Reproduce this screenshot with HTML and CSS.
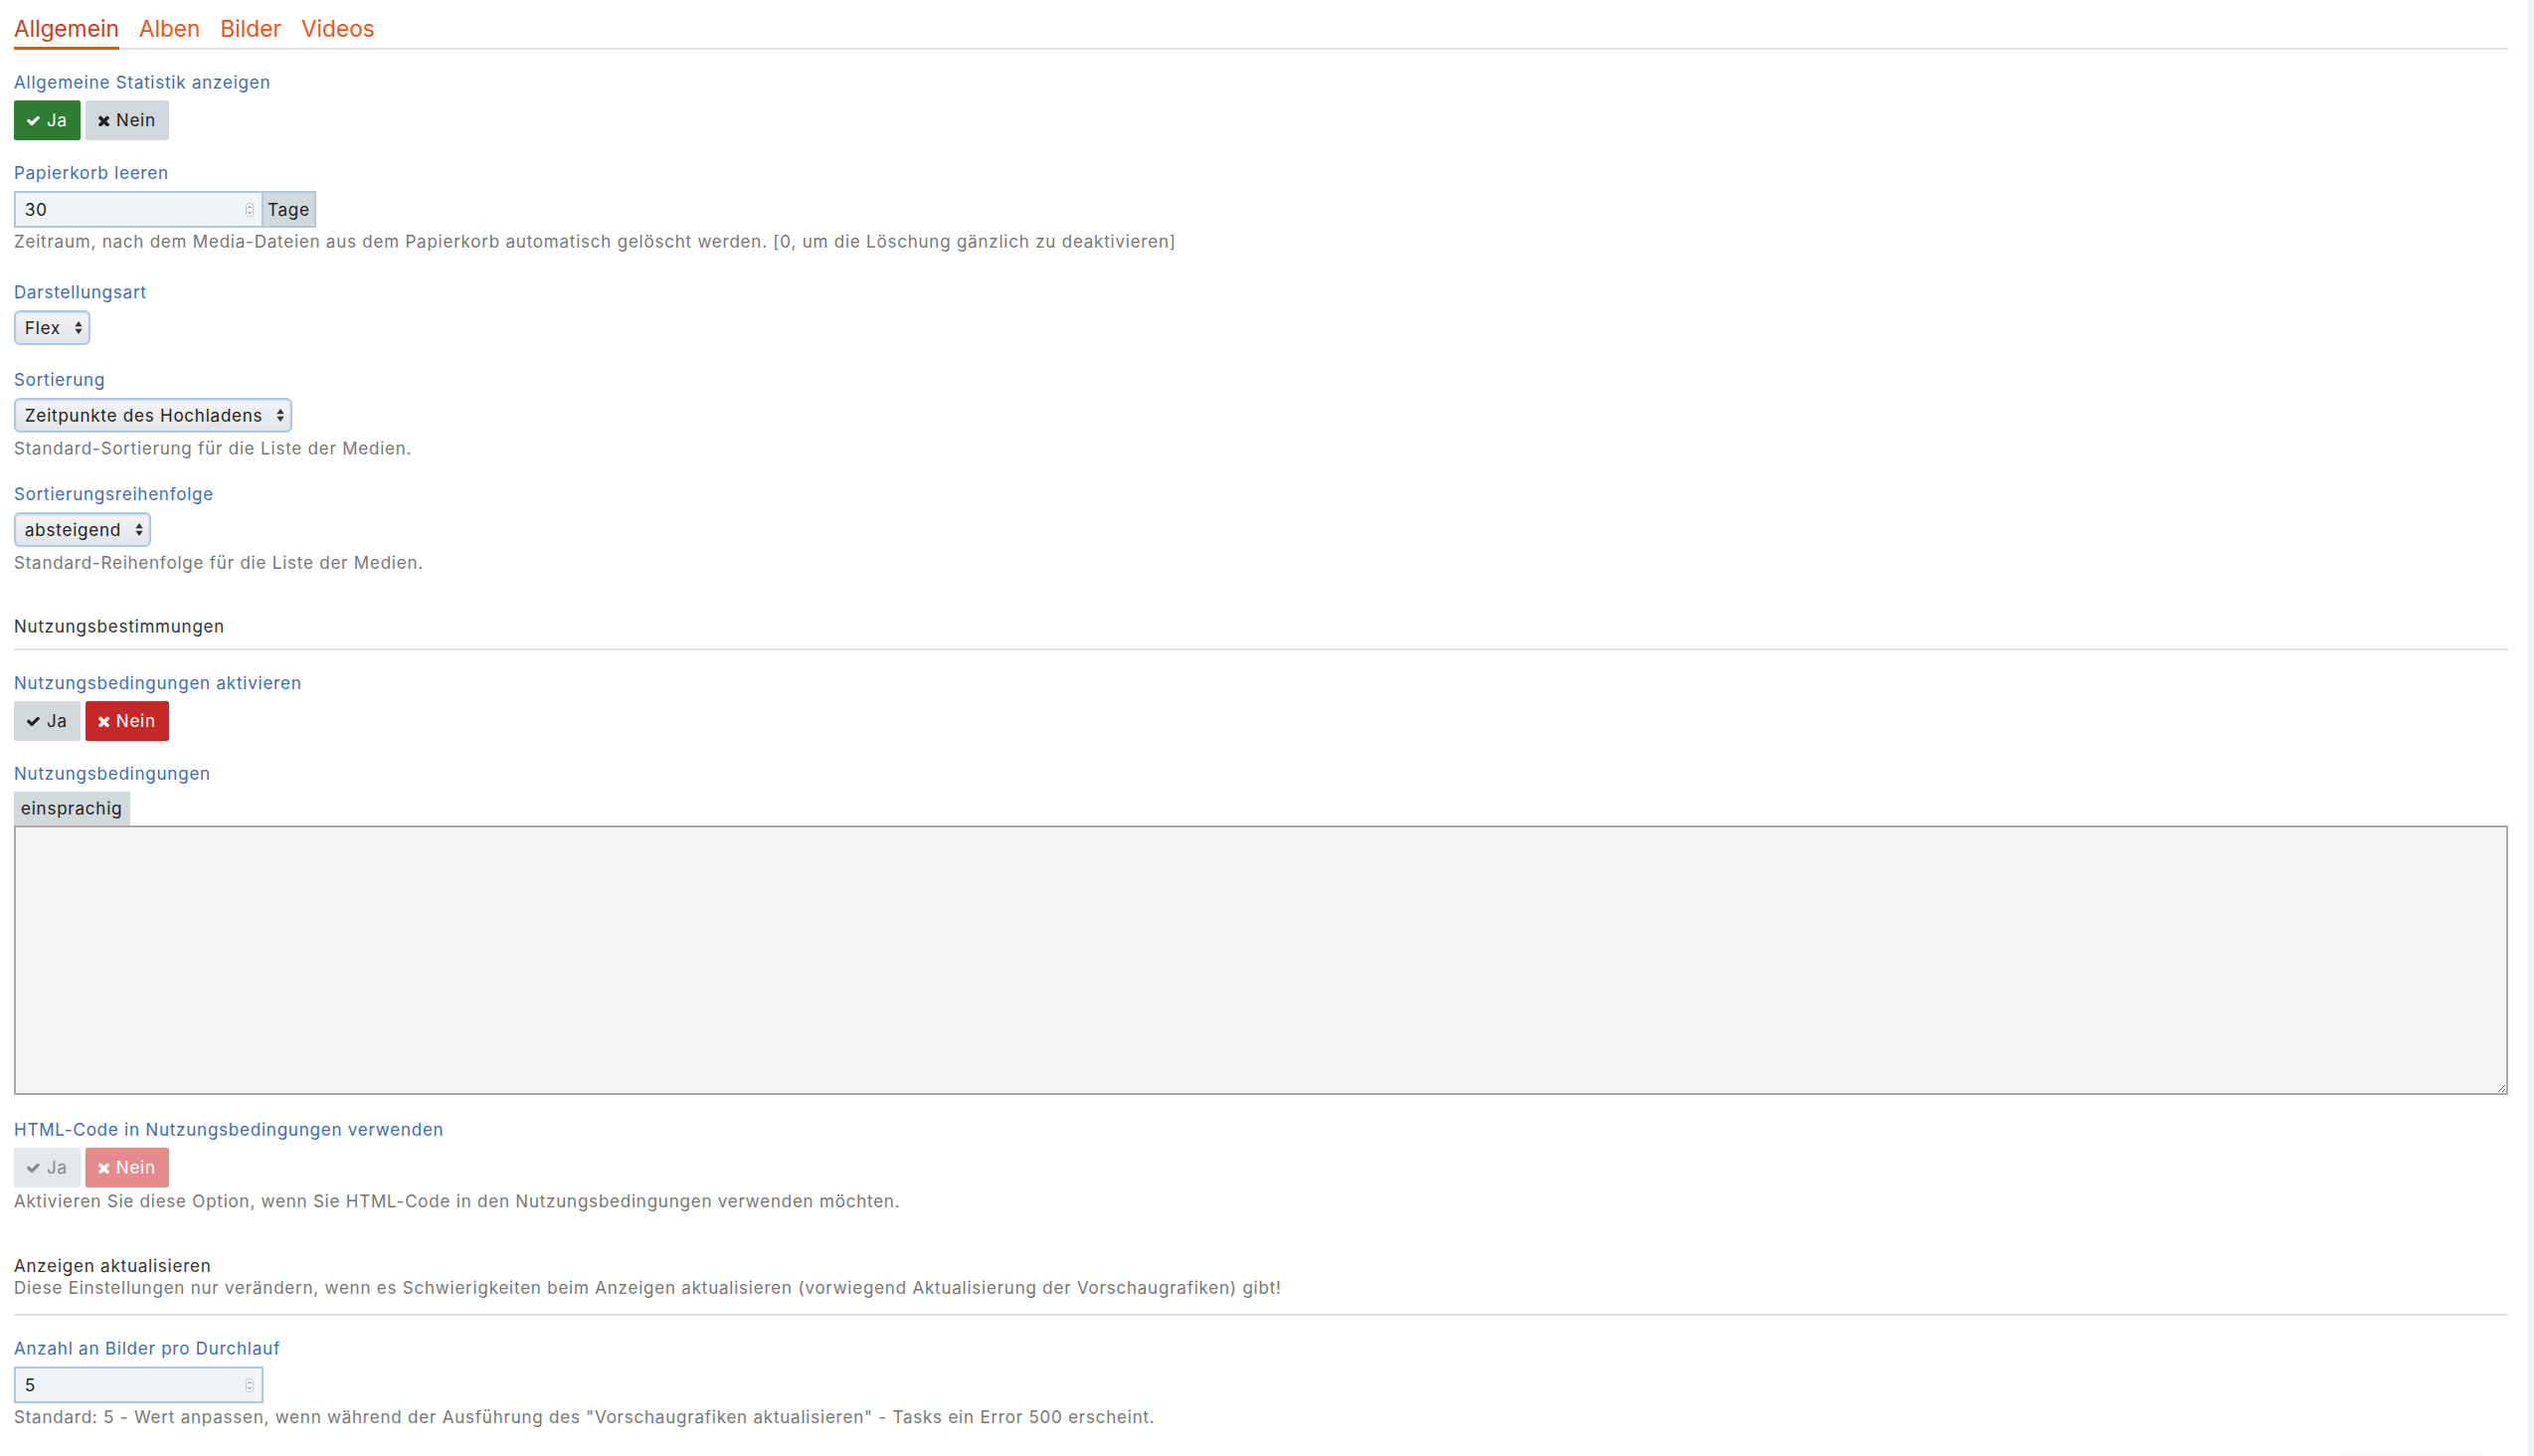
FILE: index.html
```html
<!DOCTYPE html>
<html lang="de">
<head>
<meta charset="utf-8">
<title>Medien Einstellungen</title>
<link rel="stylesheet" href="styles.css">
</head>
<body>
<div class="page">
  <nav class="tabs">
    <a class="tab active">Allgemein</a>
    <a class="tab">Alben</a>
    <a class="tab">Bilder</a>
    <a class="tab">Videos</a>
  </nav>

  <div class="group g-toggle">
    <div class="lbl">Allgemeine Statistik anzeigen</div>
    <div class="toggle">
      <span class="btn yes-on"><svg class="ic-check" viewBox="121 430 1550 996"><path d="M1671 566q0 40-28 68l-724 724-136 136q-28 28-68 28t-68-28l-136-136-362-362q-28-28-28-68t28-68l136-136q28-28 68-28t68 28l294 295 656-657q28-28 68-28t68 28l136 136q28 28 28 68z"/></svg>Ja</span>
      <span class="btn off"><svg class="ic-x" viewBox="110 318 1188 1188"><path d="M1298 1322q0 40-28 68l-136 136q-28 28-68 28t-68-28l-294-294-294 294q-28 28-68 28t-68-28l-136-136q-28-28-28-68t28-68l294-294-294-294q-28-28-28-68t28-68l136-136q28-28 68-28t68 28l294 294 294-294q28-28 68-28t68 28l136 136q28 28 28 68t-28 68l-294 294 294 294q28 28 28 68z"/></svg>Nein</span>
    </div>
  </div>

  <div class="group g-input">
    <div class="lbl">Papierkorb leeren</div>
    <div class="numgroup">
      <div class="num"><span class="val">30</span><span class="spin"><svg viewBox="0 0 8 14"><rect x="0.5" y="0.5" width="7" height="13" rx="2.5" fill="#fafafa" stroke="#c9c9c9"/><path d="M2.3 5.2 4 3.5 5.7 5.2M2.3 8.8 4 10.5 5.7 8.8" fill="none" stroke="#555" stroke-width="0.9"/></svg></span></div>
      <span class="addon">Tage</span>
    </div>
    <div class="help">Zeitraum, nach dem Media-Dateien aus dem Papierkorb automatisch gelöscht werden. [0, um die Löschung gänzlich zu deaktivieren]</div>
  </div>

  <div class="group g-select">
    <div class="lbl">Darstellungsart</div>
    <div class="select"><span>Flex</span><svg class="arr" viewBox="0 0 8 15"><path d="M4 1 7.6 6.3H0.4z M4 14 7.6 8.7H0.4z"/></svg></div>
  </div>

  <div class="group g-select-help">
    <div class="lbl">Sortierung</div>
    <div class="select"><span>Zeitpunkte des Hochladens</span><svg class="arr" viewBox="0 0 8 15"><path d="M4 1 7.6 6.3H0.4z M4 14 7.6 8.7H0.4z"/></svg></div>
    <div class="help sel-help">Standard-Sortierung für die Liste der Medien.</div>
  </div>

  <div class="group g-select-help">
    <div class="lbl">Sortierungsreihenfolge</div>
    <div class="select"><span>absteigend</span><svg class="arr" viewBox="0 0 8 15"><path d="M4 1 7.6 6.3H0.4z M4 14 7.6 8.7H0.4z"/></svg></div>
    <div class="help sel-help">Standard-Reihenfolge für die Liste der Medien.</div>
  </div>

  <section class="section">
    <h3 class="sec-title">Nutzungsbestimmungen</h3>
    <hr class="sep">
  </section>

  <div class="group g-toggle">
    <div class="lbl">Nutzungsbedingungen aktivieren</div>
    <div class="toggle">
      <span class="btn off"><svg class="ic-check" viewBox="121 430 1550 996"><path d="M1671 566q0 40-28 68l-724 724-136 136q-28 28-68 28t-68-28l-136-136-362-362q-28-28-28-68t28-68l136-136q28-28 68-28t68 28l294 295 656-657q28-28 68-28t68 28l136 136q28 28 28 68z"/></svg>Ja</span>
      <span class="btn no-on"><svg class="ic-x" viewBox="110 318 1188 1188"><path d="M1298 1322q0 40-28 68l-136 136q-28 28-68 28t-68-28l-294-294-294 294q-28 28-68 28t-68-28l-136-136q-28-28-28-68t28-68l294-294-294-294q-28-28-28-68t28-68l136-136q28-28 68-28t68 28l294 294 294-294q28-28 68-28t68 28l136 136q28 28 28 68t-28 68l-294 294 294 294q28 28 28 68z"/></svg>Nein</span>
    </div>
  </div>

  <div class="group g-text">
    <div class="lbl">Nutzungsbedingungen</div>
    <div class="langtab">einsprachig</div>
    <textarea class="area"></textarea>
  </div>

  <div class="group g-toggle-help">
    <div class="lbl">HTML-Code in Nutzungsbedingungen verwenden</div>
    <div class="toggle disabled">
      <span class="btn off"><svg class="ic-check" viewBox="121 430 1550 996"><path d="M1671 566q0 40-28 68l-724 724-136 136q-28 28-68 28t-68-28l-136-136-362-362q-28-28-28-68t28-68l136-136q28-28 68-28t68 28l294 295 656-657q28-28 68-28t68 28l136 136q28 28 28 68z"/></svg>Ja</span>
      <span class="btn no-on"><svg class="ic-x" viewBox="110 318 1188 1188"><path d="M1298 1322q0 40-28 68l-136 136q-28 28-68 28t-68-28l-294-294-294 294q-28 28-68 28t-68-28l-136-136q-28-28-28-68t28-68l294-294-294-294q-28-28-28-68t28-68l136-136q28-28 68-28t68 28l294 294 294-294q28-28 68-28t68 28l136 136q28 28 28 68t-28 68l-294 294 294 294q28 28 28 68z"/></svg>Nein</span>
    </div>
    <div class="help">Aktivieren Sie diese Option, wenn Sie HTML-Code in den Nutzungsbedingungen verwenden möchten.</div>
  </div>

  <section class="section sec2">
    <h3 class="sec-title">Anzeigen aktualisieren</h3>
    <div class="sec-desc">Diese Einstellungen nur verändern, wenn es Schwierigkeiten beim Anzeigen aktualisieren (vorwiegend Aktualisierung der Vorschaugrafiken) gibt!</div>
    <hr class="sep">
  </section>

  <div class="group g-input">
    <div class="lbl">Anzahl an Bilder pro Durchlauf</div>
    <div class="numgroup">
      <div class="num"><span class="val">5</span><span class="spin"><svg viewBox="0 0 8 14"><rect x="0.5" y="0.5" width="7" height="13" rx="2.5" fill="#fafafa" stroke="#c9c9c9"/><path d="M2.3 5.2 4 3.5 5.7 5.2M2.3 8.8 4 10.5 5.7 8.8" fill="none" stroke="#555" stroke-width="0.9"/></svg></span></div>
    </div>
    <div class="help">Standard: 5 - Wert anpassen, wenn während der Ausführung des "Vorschaugrafiken aktualisieren" - Tasks ein Error 500 erscheint.</div>
  </div>
</div>
<div class="edge"></div>
<div class="floater"></div>
</body>
</html>
```

FILE: styles.css
```css
html, body {
  margin: 0;
  padding: 0;
  background: #fff;
}
body {
  font-family: Inter, "Liberation Sans", Arial, sans-serif;
  font-size: 17px;
  letter-spacing: 0.78px;
  color: #222;
  overflow: hidden;
}
.page {
  padding: 16px 26px 0 14px;
}

/* Tabs */
.tabs {
  display: flex;
  gap: 20px;
  border-bottom: 2px solid #e1e1e1;
  margin-bottom: 23px;
}
.tab {
  font-size: 22.7px;
  letter-spacing: 0;
  line-height: 26px;
  padding-bottom: 5px;
  border-bottom: 3px solid transparent;
  margin-bottom: -2px;
  color: #e8561a;
  cursor: pointer;
}
.tab.active {
  color: #c8401c;
  border-bottom-color: #e8540f;
}

/* groups */
.group { margin-bottom: 25px; }
.g-toggle { margin-bottom: 23px; }
.g-input { margin-bottom: 31px; }
.g-select-help { margin-bottom: 26px; }
.lbl {
  color: #3c6db4;
  line-height: 20px;
  margin-bottom: 8px;
}
.help {
  color: #777;
  line-height: 20px;
  margin-top: 4px;
}
.sel-help { margin-top: 6px; }

/* toggle buttons */
.toggle {
  display: flex;
  gap: 5px;
}
.btn {
  display: inline-flex;
  align-items: center;
  height: 40px;
  padding: 0 13px 0 13px;
  border-radius: 2px;
  line-height: 20px;
  box-sizing: border-box;
}
.btn svg {
  fill: currentColor;
  margin-right: 7px;
}
.ic-check { width: 13px; height: 9px; }
.ic-x { width: 11px; height: 11px; }
.yes-on { background: #2e7d32; color: #fff; }
.no-on { background: #c62828; color: #fff; }
.off { background: #d1d9dc; color: #222; }
.toggle.disabled .off { background: #e3e8ea; color: #888; }
.toggle.disabled .no-on { background: #e48c8c; }

/* number input */
.numgroup {
  display: inline-flex;
  border: 2px solid #aec8e0;
  height: 37px;
  box-sizing: border-box;
}
.num {
  width: 247px;
  background: #eff4f9;
  display: flex;
  align-items: center;
  padding: 0 8px 0 9px;
  box-sizing: border-box;
}
.num .val { flex: 1; }
.spin { display: flex; }
.spin svg { width: 8px; height: 14px; }
.addon {
  background: #d0d9dc;
  border-left: 2px solid #aec8e0;
  padding: 0 4px 0 4px;
  display: flex;
  align-items: center;
}

/* select */
.select {
  display: inline-flex;
  align-items: center;
  height: 35px;
  box-sizing: border-box;
  border: 2px solid #abc9e8;
  border-radius: 6px;
  background: linear-gradient(#f3f4f6, #e1e4e8);
  box-shadow: inset 0 1px 2px rgba(0,0,0,0.12);
  padding: 0 6px 0 9px;
  color: #222;
}
.select span { margin-right: 14px; }
.select .arr { width: 8px; height: 15px; fill: #333; }

/* section headings */
.section { margin-top: 44px; }
.sec-title {
  margin: 0;
  font-size: 17px;
  font-weight: normal;
  color: #333;
  line-height: 20px;
}
.sep {
  border: 0;
  border-top: 2px solid #e1e1e1;
  margin: 12px 0 23px 0;
  height: 0;
}
.sec2 .sec-title { line-height: 22px; }
.sec-desc { color: #777; line-height: 22px; }
.sec2 .sep { margin-top: 15px; margin-bottom: 23px; }

/* textarea */
.langtab {
  display: inline-block;
  background: #d1d9dc;
  height: 34px;
  line-height: 34px;
  padding: 0 8px 0 7px;
}
.area {
  display: block;
  width: 100%;
  height: 271px;
  box-sizing: border-box;
  border: 2px solid #a9a9ab;
  background: #f4f4f4;
  margin: 0;
  font-family: inherit;
  font-size: 16px;
}

/* overlays at window edges */
.edge {
  position: fixed;
  top: 0;
  right: 0;
  bottom: 0;
  width: 6px;
  background: #eef1f6;
}
.floater {
  position: fixed;
  right: 52px;
  bottom: -50px;
  width: 145px;
  height: 44px;
  border-radius: 8px;
  background: #fff;
  box-shadow: 0 0 14px rgba(0,0,0,0.13);
}
```
